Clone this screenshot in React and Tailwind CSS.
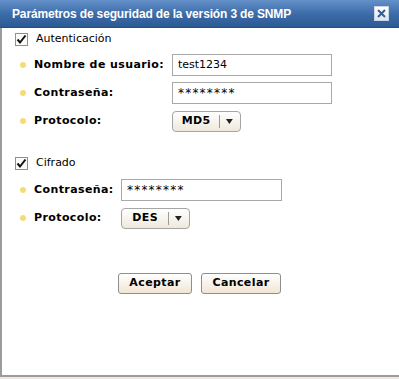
import React from 'react'

const label = "font-['DejaVu_Sans',sans-serif] font-bold text-[11px] tracking-[0.4px] text-black"
const plain = "font-['DejaVu_Sans',sans-serif] text-[11px] text-black"

function Check({ text }) {
  return (
    <div className="flex items-center h-[16px] pl-[13px]">
      <div className="w-[13px] h-[13px] border border-[#8f8f8f] bg-[#fbfbf8] flex items-center justify-center">
        <svg width="11" height="11" viewBox="0 0 11 11">
          <path d="M1.5 5.5 L4 8.5 L9.5 1.5" stroke="#111" strokeWidth="2" fill="none" />
        </svg>
      </div>
      <span className={plain + ' ml-[8px] text-[11.5px]'}>{text}</span>
    </div>
  )
}

function Bullet() {
  return <span className="w-[6px] h-[6px] rounded-full bg-[#f6dc76] mr-[8px] ml-[18px]" />
}

function Row({ text, labelW, children }) {
  return (
    <div className="flex items-center h-[28px]">
      <Bullet />
      <span className={label + ' shrink-0'} style={{ width: labelW }}>{text}</span>
      {children}
    </div>
  )
}

function Field({ value, w, pass }) {
  return (
    <div
      className={
        'h-[22px] border border-[#a9a9a9] bg-white flex items-center pl-[5px] ' +
        (pass ? "font-['DejaVu_Sans',sans-serif] text-[12px] tracking-[1.2px]" : plain)
      }
      style={{ width: w }}
    >
      {value}
    </div>
  )
}

function Select({ value }) {
  return (
    <div className="w-[69px] h-[21px] rounded-[4px] border border-[#a5a5a5] bg-gradient-to-b from-white to-[#efe9dc] flex items-center">
      <span className={label + ' w-[47px] text-center text-[10.5px]'}>{value}</span>
      <span className="w-px h-[13px] bg-[#9a9a9a]" />
      <svg width="20" height="8" viewBox="0 0 20 8">
        <path d="M6 2 L13 2 L9.5 7 Z" fill="#222" />
      </svg>
    </div>
  )
}

function Btn({ text, w }) {
  return (
    <div
      className="h-[21px] rounded-[3px] border border-[#8e8e8e] bg-gradient-to-b from-white to-[#f1e6d4] flex items-center justify-center"
      style={{ width: w }}
    >
      <span className={label + ' text-[11.5px]'}>{text}</span>
    </div>
  )
}

export default function App() {
  return (
    <div className="w-[399px] h-[379px] flex flex-col bg-[#efe8dc]">
      <div className="h-[28px] bg-gradient-to-b from-[#6591c9] via-[#3d6daa] to-[#2b5993] border-b border-[#244d82] flex items-center justify-between pl-[12px] pr-[10px] shrink-0">
        <span className="font-['Liberation_Sans',sans-serif] font-bold text-[12px] tracking-[-0.15px] text-white">
          Parámetros de seguridad de la versión 3 de SNMP
        </span>
        <div className="w-[15px] h-[15px] bg-gradient-to-b from-white to-[#dfe6ef] border border-[#c8d3e2] flex items-center justify-center">
          <svg width="11" height="11" viewBox="0 0 11 11">
            <path d="M2 2 L9 9 M9 2 L2 9" stroke="#2f5f9c" strokeWidth="2" />
          </svg>
        </div>
      </div>
      <div className="h-[349px] bg-white border-l-2 border-b-2 border-[#9c9c9c] flex flex-col pt-[3px]">
        <Check text="Autenticación" />
        <div className="mt-[4px]">
          <Row text="Nombre de usuario:" labelW={138}>
            <Field value="test1234" w={160} />
          </Row>
          <Row text="Contraseña:" labelW={138}>
            <Field value="********" w={160} pass />
          </Row>
          <Row text="Protocolo:" labelW={138}>
            <Select value="MD5" />
          </Row>
        </div>
        <div className="mt-[20px]">
          <Check text="Cifrado" />
        </div>
        <div className="mt-[5px]">
          <Row text="Contraseña:" labelW={87}>
            <Field value="********" w={161} pass />
          </Row>
          <Row text="Protocolo:" labelW={87}>
            <Select value="DES" />
          </Row>
        </div>
        <div className="flex gap-[9px] pl-[116px] mt-[41px]">
          <Btn text="Aceptar" w={74} />
          <Btn text="Cancelar" w={80} />
        </div>
      </div>
    </div>
  )
}
